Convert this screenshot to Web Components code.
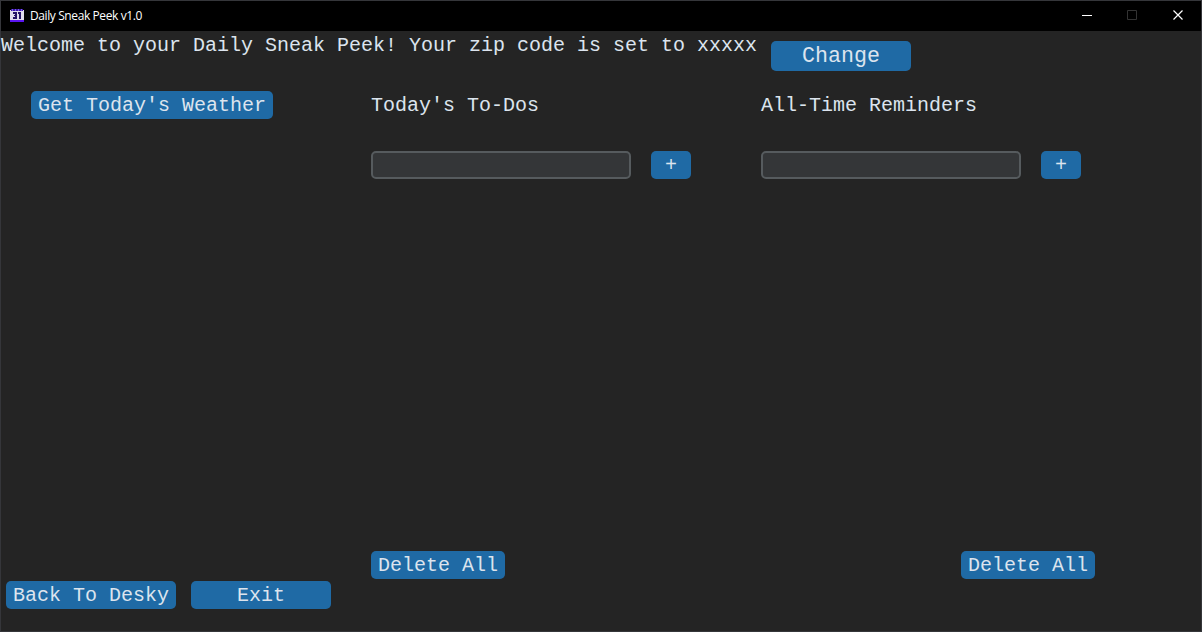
<!DOCTYPE html>
<html lang="en">
<head>
<meta charset="utf-8">
<title>Daily Sneak Peek v1.0</title>
<style>
html,body{margin:0;height:100%;background:#242424;overflow:hidden}
</style>
</head>
<body>
<sneak-app></sneak-app>
<script>
function define(name, html){
  const t = document.createElement('template');
  t.innerHTML = html;
  customElements.define(name, class extends HTMLElement{
    constructor(){
      super();
      this.attachShadow({mode:'open'}).append(t.content.cloneNode(true));
    }
  });
}

define('title-bar', `
<style>
:host{display:flex;align-items:center;height:30px;background:#000;color:#fff;font:12px/30px "Open Sans","Noto Sans",sans-serif;box-sizing:border-box;padding-left:8px}
.icon{width:16px;height:16px;flex:none;margin-right:5px}
.name{flex:1;letter-spacing:-.4px;white-space:nowrap}
.ctl{width:46px;height:30px;flex:none}
.max{width:45px}
</style>
<svg class="icon" viewBox="0 0 16 16" shape-rendering="crispEdges">
  <path d="M2 1h12v2H2z" fill="#3a1ba0"/>
  <path d="M1 2h14v11H1z" fill="#e0dcec"/>
  <path d="M2 1h12v2H2z" fill="#3a1ba0"/>
  <path d="M3 1h1v2H3zM6 1h1v2H6zM9 1h1v2H9zM12 1h1v2h-1z" fill="#7a50f4"/>
  <path d="M1 12h14v2H1z" fill="#5a14f0"/>
  <path d="M4 4h4v7H4V9h2V8H5V7h1V6H4zM9 4h3v7h-2V6H9z" fill="#241466"/>
</svg>
<span class="name"><slot></slot></span>
<svg class="ctl" viewBox="0 0 46 30"><path d="M18 14.5h10" stroke="#fff"/></svg>
<svg class="ctl max" viewBox="0 0 45 30"><path d="M17.5 9.5h9v9h-9z" fill="none" stroke="#333"/></svg>
<svg class="ctl" viewBox="0 0 46 30"><path d="M18.5 9.5l9 9m0-9l-9 9" stroke="#fff" stroke-width="1.2"/></svg>
`);

define('ctk-button', `
<style>
:host{display:flex;box-sizing:border-box;height:28px;min-width:0;flex:none}
button{all:unset;box-sizing:border-box;flex:1;text-align:center;white-space:pre;background:#1f6aa5;border-radius:5px;color:#dce4ee;font:inherit;line-height:27px}
:host(.big) button{font-size:21.67px;line-height:29px}
:host(.plus) button{line-height:26px;padding-top:2px}
</style>
<button><slot></slot></button>
`);

define('ctk-entry', `
<style>
:host{display:block;width:260px;height:28px;flex:none}
input{box-sizing:border-box;display:block;width:100%;height:100%;border:2px solid #565b5e;border-radius:5px;background:#343638;color:#dce4ee;font:inherit;padding:0 6px;outline:0}
</style>
<input type="text" aria-label="New item">
`);

define('note-list', `
<style>
:host{display:flex;flex-direction:column;height:488px}
.head{height:28px;line-height:29px;white-space:pre}
.add{display:flex;gap:20px;margin-top:32px}
.plus{width:40px}
.del{width:134px;margin:auto 0 0 var(--delete-offset,0)}
</style>
<div class="head"><slot></slot></div>
<div class="add"><ctk-entry></ctk-entry><ctk-button class="plus">+</ctk-button></div>
<ctk-button class="del">Delete All</ctk-button>
`);

define('sneak-app', `
<style>
:host{display:flex;flex-direction:column;box-sizing:border-box;width:1202px;height:632px;border:1px solid #35363a;background:#242424;color:#dce4ee;font:20px/28px "Courier New","Liberation Mono",monospace}
.welcome{display:flex;height:60px}
.welcome span{width:770px;white-space:pre;line-height:30px}
.change{width:140px;height:30px;margin-top:10px}
.main{display:grid;grid-template-columns:340px 390px 1fr;padding-left:30px}
.weather{width:242px}
.right{--delete-offset:200px}
.foot{display:flex;gap:15px;padding:2px 0 0 5px}
.back{width:170px}
.exit{width:140px}
</style>
<title-bar>Daily Sneak Peek v1.0</title-bar>
<div class="welcome"><span>Welcome to your Daily Sneak Peek! Your zip code is set to xxxxx</span><ctk-button class="big change">Change</ctk-button></div>
<div class="main">
  <div><ctk-button class="weather">Get Today's Weather</ctk-button></div>
  <note-list>Today's To-Dos</note-list>
  <note-list class="right">All-Time Reminders</note-list>
</div>
<div class="foot"><ctk-button class="back">Back To Desky</ctk-button><ctk-button class="exit">Exit</ctk-button></div>
`);
</script>
</body>
</html>
